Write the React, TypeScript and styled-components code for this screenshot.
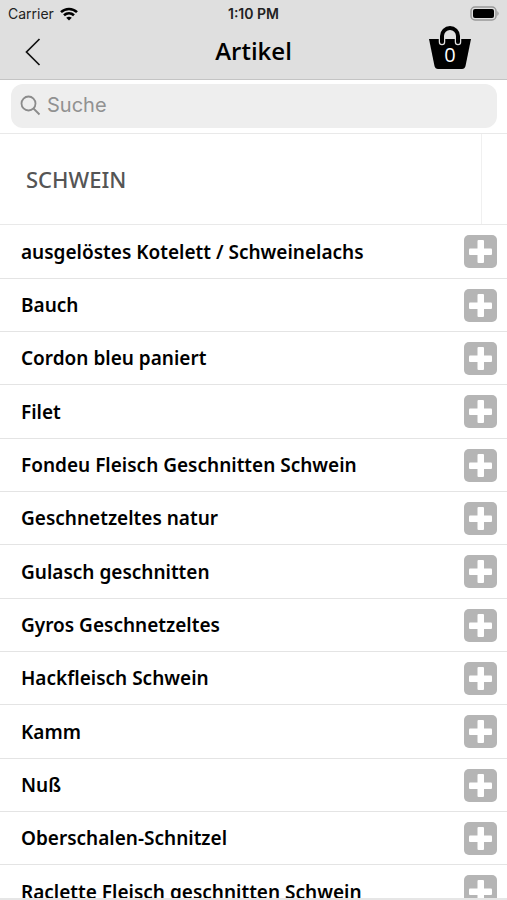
import React, { useState } from 'react';
import styled, { createGlobalStyle } from 'styled-components';

const GlobalStyle = createGlobalStyle`
  *, *::before, *::after { box-sizing: border-box; }
  body {
    margin: 0;
    background: #fff;
    color: #000;
    font-family: "Noto Sans", "Open Sans", sans-serif;
  }
  button, input { font: inherit; color: inherit; }
`;

const Screen = styled.div`
  display: flex;
  flex-direction: column;
  height: 100vh;
  overflow: hidden;
`;

const TopArea = styled.div`
  flex: none;
  background: #dfdfdf;
  border-bottom: 1px solid #c4c4c4;
`;

const StatusBar = styled.div`
  display: grid;
  grid-template-columns: 1fr auto 1fr;
  align-items: center;
  height: 25px;
  padding: 2px 8px 0;
  font: 400 14px/20px Inter, sans-serif;
  color: #222;
`;

const Network = styled.div`
  display: flex;
  align-items: center;
  gap: 6px;
`;

const Clock = styled.time`
  font-size: 14px;
  font-weight: 600;
`;

const BatteryIcon = styled.svg`
  justify-self: end;
`;

const NavBar = styled.header`
  display: grid;
  grid-template-columns: 1fr auto 1fr;
  align-items: center;
  height: 54px;
  padding: 0 35px 0 16px;
`;

const IconButton = styled.button<{ $corner?: boolean }>`
  display: grid;
  place-items: center;
  justify-self: ${({ $corner }) => ($corner ? 'end' : 'start')};
  align-self: ${({ $corner }) => ($corner ? 'start' : 'center')};
  padding: 0;
  border: 0;
  background: none;
  cursor: pointer;
`;

const Title = styled.h1`
  margin: 0 0 2px 19px;
  font-family: "Open Sans", sans-serif;
  font-size: 24px;
  font-weight: 600;
  line-height: 32px;
`;

const BasketCount = styled.text`
  font-family: "Open Sans", sans-serif;
  font-size: 20px;
  fill: #fff;
`;

const SearchArea = styled.div`
  flex: none;
  padding: 4px 10px 5px 11px;
  border-bottom: 1px solid #e9e9e9;
`;

const SearchField = styled.label`
  display: flex;
  align-items: center;
  gap: 6px;
  height: 44px;
  padding: 0 9px 2px;
  border-radius: 12px;
  background: #eeeeee;
`;

const SearchInput = styled.input`
  flex: 1;
  min-width: 0;
  padding: 0;
  border: 0;
  outline: 0;
  background: none;
  font: 400 20px/28px Inter, sans-serif;
  &::placeholder { color: #919191; opacity: 1; }
  &::-webkit-search-cancel-button { display: none; }
`;

const SectionHeader = styled.div`
  display: flex;
  flex: none;
  height: 91px;
  padding-right: 25px;
  border-bottom: 1px solid #e9e9e9;
`;

const SectionTitle = styled.h2`
  display: flex;
  flex: 1;
  align-items: center;
  margin: 0;
  padding-left: 26px;
  border-right: 1px solid #f0f0f0;
  color: #555;
  font-size: 22px;
  font-weight: 500;
`;

const List = styled.ul`
  flex: 1;
  min-height: 0;
  margin: 0;
  padding: 0;
  overflow: hidden;
  list-style: none;
  border-bottom: 2px solid #e6e6e6;
`;

const Row = styled.li`
  display: flex;
  align-items: center;
  justify-content: space-between;
  height: 53px;
  padding: 0 10px 0 21px;
  border-bottom: 1px solid #e4e4e4;
  font-size: 19px;
  font-weight: 600;
  white-space: nowrap;
  &:nth-child(3n + 1) { height: 54px; }
`;

const articles = [
  'ausgelöstes Kotelett / Schweinelachs',
  'Bauch',
  'Cordon bleu paniert',
  'Filet',
  'Fondeu Fleisch Geschnitten Schwein',
  'Geschnetzeltes natur',
  'Gulasch geschnitten',
  'Gyros Geschnetzeltes',
  'Hackfleisch Schwein',
  'Kamm',
  'Nuß',
  'Oberschalen-Schnitzel',
  'Raclette Fleisch geschnitten Schwein',
];

function WifiIcon() {
  return (
    <svg width="18" height="14" viewBox="0 0 18 14" fill="none" stroke="#000" strokeWidth="2.6" aria-hidden="true">
      <path d="M1 5.1C5.5.9 12.500.9 17 5.1" />
      <path d="M4 8.300C6.900 5.700 11.100 5.700 14 8.300" />
      <path d="M9 13.500 6.200 10.700Q9 8.600 11.800 10.700Z" fill="#000" stroke="none" />
    </svg>
  );
}

function Battery() {
  return (
    <BatteryIcon width="29" height="15" viewBox="0 0 29 15" role="img" aria-label="Akku">
      <rect x="1" y="1" width="25" height="13" rx="4" fill="#dfdfdf" stroke="#999" strokeWidth="1.500" />
      <rect x="3" y="3" width="21" height="9" rx="2" fill="#000" />
      <path d="M27.300 5Q30 7.500 27.300 10Z" fill="#999" />
    </BatteryIcon>
  );
}

function Basket({ count }: { count: number }) {
  return (
    <svg width="44" height="46" viewBox="0 0 44 46" aria-hidden="true">
      <path d="M1 14H43L37.500 41Q36.800 44 34 44H10Q7.200 44 6.500 41Z" fill="#000" />
      <path d="M14 17V11a8 8 0 0 1 16 0V17" fill="none" stroke="#dfdfdf" strokeWidth="6.500" strokeLinecap="round" />
      <path d="M14 17V11a8 8 0 0 1 16 0V17" fill="none" stroke="#000" strokeWidth="4" strokeLinecap="round" />
      <BasketCount x="22" y="37" textAnchor="middle">{count}</BasketCount>
    </svg>
  );
}

function PlusIcon() {
  return (
    <svg width="33" height="33" viewBox="0 0 33 33" aria-hidden="true">
      <rect width="33" height="33" rx="5" fill="#b5b5b5" />
      <rect x="5" y="13.500" width="23" height="6.500" rx="1" fill="#fff" />
      <rect x="13.500" y="5" width="6.500" height="23" rx="1" fill="#fff" />
    </svg>
  );
}

export default function App() {
  const [count, setCount] = useState(0);
  const [query, setQuery] = useState('');
  const visible = articles.filter((name) => name.toLowerCase().includes(query.toLowerCase()));

  return (
    <Screen>
      <GlobalStyle />
      <TopArea>
        <StatusBar>
          <Network>
            Carrier
            <WifiIcon />
          </Network>
          <Clock>1:10 PM</Clock>
          <Battery />
        </StatusBar>
        <NavBar>
          <IconButton type="button" aria-label="Zurück">
            <svg width="32" height="32" viewBox="0 0 32 32" fill="none" stroke="#111" strokeWidth="1.700" aria-hidden="true">
              <path d="M23.500 3 10.500 16 23.500 29" />
            </svg>
          </IconButton>
          <Title>Artikel</Title>
          <IconButton type="button" $corner aria-label={`Warenkorb: ${count}`}>
            <Basket count={count} />
          </IconButton>
        </NavBar>
      </TopArea>
      <SearchArea>
        <SearchField>
          <svg width="21" height="21" viewBox="0 0 21 21" fill="none" stroke="#8b8b8b" strokeWidth="1.800" aria-hidden="true">
            <circle cx="8.500" cy="8.500" r="7" />
            <path d="m13.500 13.500 6 6" />
          </svg>
          <SearchInput
            type="search"
            placeholder="Suche"
            aria-label="Suche"
            value={query}
            onChange={(event) => setQuery(event.target.value)}
          />
        </SearchField>
      </SearchArea>
      <SectionHeader>
        <SectionTitle>SCHWEIN</SectionTitle>
      </SectionHeader>
      <List>
        {visible.map((name) => (
          <Row key={name}>
            {name}
            <IconButton type="button" aria-label={`${name} hinzufügen`} onClick={() => setCount(count + 1)}>
              <PlusIcon />
            </IconButton>
          </Row>
        ))}
      </List>
    </Screen>
  );
}
